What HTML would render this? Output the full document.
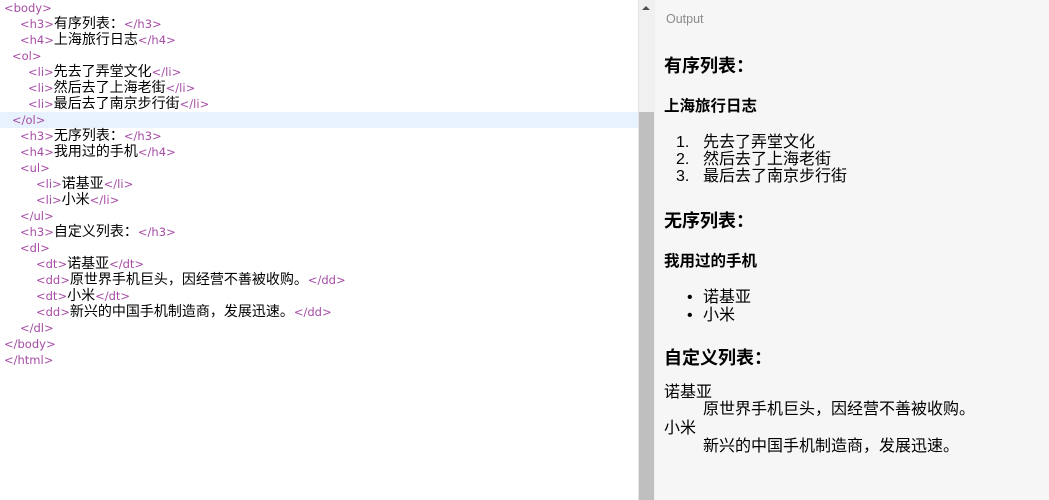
<!DOCTYPE html>
<html><head><meta charset="utf-8"><style>
*{margin:0;padding:0;box-sizing:border-box}
body{width:1049px;height:500px;overflow:hidden;background:#fff;position:relative;font-family:"Liberation Sans","Noto Sans CJK SC",sans-serif}
.ed{position:absolute;left:0;top:0;width:638px;height:500px;background:#fff}
.hl{position:absolute;left:0;top:112px;width:638px;height:16px;background:#e8f2fe}
.l{position:absolute;height:16px;line-height:16px;font-size:14px;color:#000;white-space:nowrap;font-family:"Noto Sans CJK SC",sans-serif;top:-1px}
.t{color:#a64ca6;font-family:"DejaVu Sans",sans-serif;font-size:11.5px}
.sb{position:absolute;left:638px;top:0;width:17px;height:500px;background:#f0f0f0;border-left:1px solid #e4e4e4}
.th{position:absolute;left:639px;top:112px;width:15px;height:388px;background:#bfbfbf}
.ar{position:absolute;left:642px;top:6px;width:0;height:0;border-left:4px solid transparent;border-right:4px solid transparent;border-bottom:4px solid #505050}
.out{position:absolute;left:655px;top:0;width:394px;height:500px;background:#f6f6f6}
.o{position:absolute;white-space:nowrap;color:#000;font-family:"Liberation Sans","Noto Sans CJK SC",sans-serif}
.lbl{position:absolute;left:666px;top:12px;font-size:12.5px;color:#8a8a8a}
.h3{font-size:18px;font-weight:bold}
.h4{font-size:15.5px;font-weight:bold}
.p{font-size:16px;line-height:17px}
</style></head><body>
<div class="ed"></div>
<div class="hl"></div>
<div class="l" style="left:4px;margin-top:0"><span class="t">&lt;body&gt;</span></div>
<div class="l" style="left:20px;margin-top:16px"><span class="t">&lt;h3&gt;</span>有序列表：<span class="t">&lt;/h3&gt;</span></div>
<div class="l" style="left:20px;margin-top:32px"><span class="t">&lt;h4&gt;</span>上海旅行日志<span class="t">&lt;/h4&gt;</span></div>
<div class="l" style="left:12px;margin-top:48px"><span class="t">&lt;ol&gt;</span></div>
<div class="l" style="left:28px;margin-top:64px"><span class="t">&lt;li&gt;</span>先去了弄堂文化<span class="t">&lt;/li&gt;</span></div>
<div class="l" style="left:28px;margin-top:80px"><span class="t">&lt;li&gt;</span>然后去了上海老街<span class="t">&lt;/li&gt;</span></div>
<div class="l" style="left:28px;margin-top:96px"><span class="t">&lt;li&gt;</span>最后去了南京步行街<span class="t">&lt;/li&gt;</span></div>
<div class="l" style="left:12px;margin-top:112px"><span class="t">&lt;/ol&gt;</span></div>
<div class="l" style="left:20px;margin-top:128px"><span class="t">&lt;h3&gt;</span>无序列表：<span class="t">&lt;/h3&gt;</span></div>
<div class="l" style="left:20px;margin-top:144px"><span class="t">&lt;h4&gt;</span>我用过的手机<span class="t">&lt;/h4&gt;</span></div>
<div class="l" style="left:20px;margin-top:160px"><span class="t">&lt;ul&gt;</span></div>
<div class="l" style="left:36px;margin-top:176px"><span class="t">&lt;li&gt;</span>诺基亚<span class="t">&lt;/li&gt;</span></div>
<div class="l" style="left:36px;margin-top:192px"><span class="t">&lt;li&gt;</span>小米<span class="t">&lt;/li&gt;</span></div>
<div class="l" style="left:20px;margin-top:208px"><span class="t">&lt;/ul&gt;</span></div>
<div class="l" style="left:20px;margin-top:224px"><span class="t">&lt;h3&gt;</span>自定义列表：<span class="t">&lt;/h3&gt;</span></div>
<div class="l" style="left:20px;margin-top:240px"><span class="t">&lt;dl&gt;</span></div>
<div class="l" style="left:36px;margin-top:256px"><span class="t">&lt;dt&gt;</span>诺基亚<span class="t">&lt;/dt&gt;</span></div>
<div class="l" style="left:36px;margin-top:272px"><span class="t">&lt;dd&gt;</span>原世界手机巨头，因经营不善被收购。<span class="t">&lt;/dd&gt;</span></div>
<div class="l" style="left:36px;margin-top:288px"><span class="t">&lt;dt&gt;</span>小米<span class="t">&lt;/dt&gt;</span></div>
<div class="l" style="left:36px;margin-top:304px"><span class="t">&lt;dd&gt;</span>新兴的中国手机制造商，发展迅速。<span class="t">&lt;/dd&gt;</span></div>
<div class="l" style="left:20px;margin-top:320px"><span class="t">&lt;/dl&gt;</span></div>
<div class="l" style="left:4px;margin-top:336px"><span class="t">&lt;/body&gt;</span></div>
<div class="l" style="left:4px;margin-top:352px"><span class="t">&lt;/html&gt;</span></div>
<div class="sb"></div><div class="th"></div><div class="ar"></div>
<div class="out"></div>
<div class="lbl">Output</div>
<div class="o h3" style="left:664px;top:52px">有序列表：</div>
<div class="o h4" style="left:664px;top:94px">上海旅行日志</div>
<div class="o p" style="left:676px;top:134px">1.</div><div class="o p" style="left:703px;top:134px">先去了弄堂文化</div>
<div class="o p" style="left:676px;top:151px">2.</div><div class="o p" style="left:703px;top:151px">然后去了上海老街</div>
<div class="o p" style="left:676px;top:168px">3.</div><div class="o p" style="left:703px;top:168px">最后去了南京步行街</div>
<div class="o h3" style="left:664px;top:207px">无序列表：</div>
<div class="o h4" style="left:664px;top:249px">我用过的手机</div>
<div class="o p" style="left:687px;top:289px">•</div><div class="o p" style="left:703px;top:289px">诺基亚</div>
<div class="o p" style="left:687px;top:307px">•</div><div class="o p" style="left:703px;top:307px">小米</div>
<div class="o h3" style="left:664px;top:344px">自定义列表：</div>
<div class="o p" style="left:664px;top:384px">诺基亚</div>
<div class="o p" style="left:703px;top:401px">原世界手机巨头，因经营不善被收购。</div>
<div class="o p" style="left:664px;top:420px">小米</div>
<div class="o p" style="left:703px;top:438px">新兴的中国手机制造商，发展迅速。</div>
</body></html>
